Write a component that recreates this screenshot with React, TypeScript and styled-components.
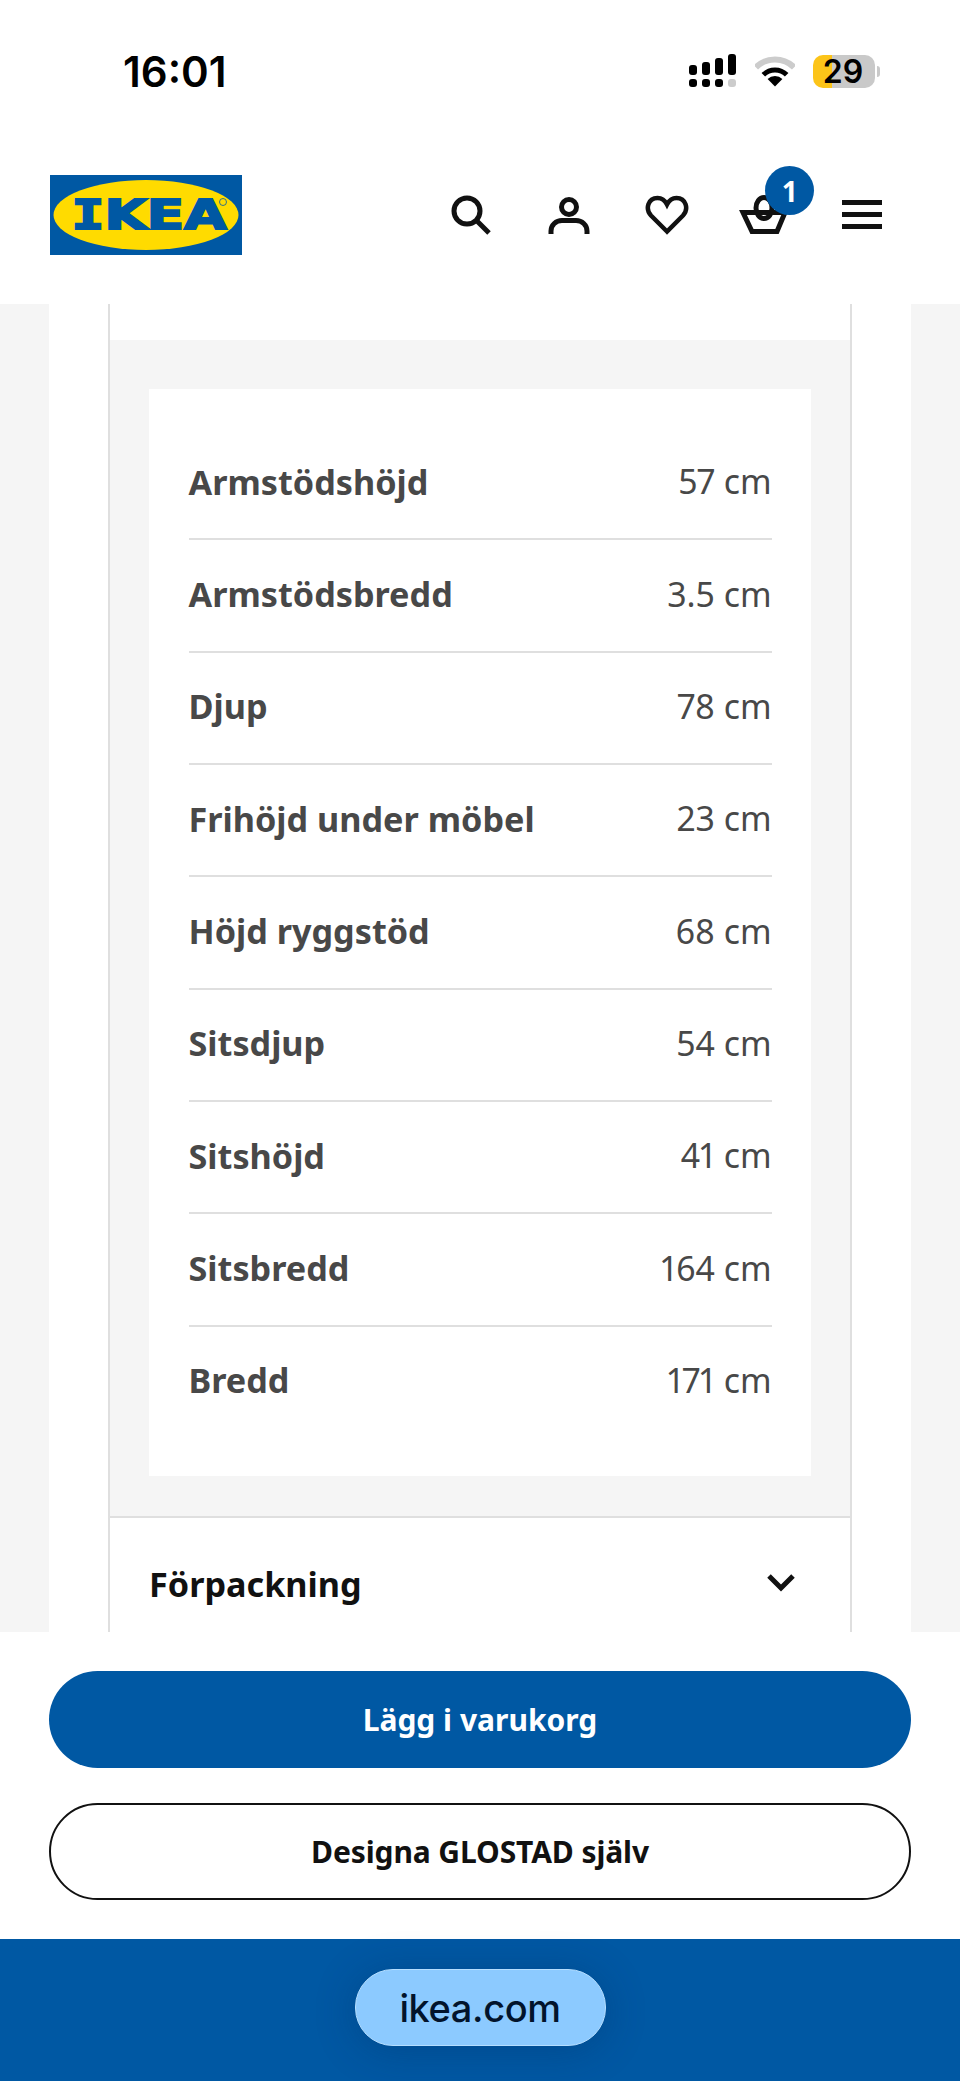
import styled, { createGlobalStyle } from 'styled-components';

const specs = [
	['Armstödshöjd', '57 cm'],
	['Armstödsbredd', '3.5 cm'],
	['Djup', '78 cm'],
	['Frihöjd under möbel', '23 cm'],
	['Höjd ryggstöd', '68 cm'],
	['Sitsdjup', '54 cm'],
	['Sitshöjd', '41 cm'],
	['Sitsbredd', '164 cm'],
	['Bredd', '171 cm'],
];

const GlobalStyle = createGlobalStyle`
	html, body {
		margin: 0;
		padding: 0;
		background: #fff;
	}
	* {
		box-sizing: border-box;
	}
`;

const Page = styled.div`
	width: 960px;
	height: 2081px;
	display: flex;
	flex-direction: column;
	overflow: hidden;
	font-family: "Noto Sans", sans-serif;
	background: #fff;
`;

const StatusBar = styled.div`
	height: 142px;
	flex: none;
	display: flex;
	align-items: center;
	justify-content: space-between;
	padding: 0 85px 0 123px;
`;

const Time = styled.span`
	font-family: Inter, sans-serif;
	font-size: 42px;
	font-weight: 600;
	color: #000;
`;

const StatusIcons = styled.div`
	display: flex;
	align-items: center;
	gap: 18px;
`;

const Battery = styled.div`
	position: relative;
	width: 62px;
	height: 33px;
	padding-right: 2px;
	border-radius: 10px;
	background: linear-gradient(90deg, #fcc419 0, #fcc419 31%, #c9c9c9 31%);
	display: flex;
	align-items: center;
	justify-content: center;
	font-family: Inter, sans-serif;
	font-size: 32px;
	font-weight: 600;
	color: #000;

	&::after {
		content: '';
		position: absolute;
		right: -5px;
		top: 11px;
		width: 3px;
		height: 11px;
		border-radius: 0 3px 3px 0;
		background: #c9c9c9;
	}
`;

const Nav = styled.header`
	height: 162px;
	flex: none;
	display: flex;
	align-items: flex-start;
	justify-content: space-between;
	padding: 33px 73px 0 50px;
`;

const NavIcons = styled.div`
	height: 80px;
	display: flex;
	align-items: center;
	gap: 47.7px;
`;

const IconButton = styled.div`
	position: relative;
	width: 50px;
	height: 50px;
	display: flex;
	align-items: center;
	justify-content: center;
`;

const Badge = styled.span`
	position: absolute;
	left: 26px;
	top: -24px;
	width: 49px;
	height: 49px;
	border-radius: 50%;
	background: #0058a3;
	color: #fff;
	font-size: 28px;
	font-weight: 700;
	display: flex;
	align-items: center;
	justify-content: center;
`;

const Content = styled.main`
	flex: 1;
	min-height: 0;
	overflow: hidden;
	background: #f5f5f5;
	padding: 0 49px;
`;

const Sheet = styled.div`
	height: 100%;
	background: #fff;
	padding: 0 59px;
`;

const Accordion = styled.section`
	padding-top: 36px;
	border-left: 2px solid #dfdfdf;
	border-right: 2px solid #dfdfdf;
`;

const Panel = styled.div`
	background: #f5f5f5;
	padding: 49px 39px 40px;
	border-bottom: 2px solid #dfdfdf;
`;

const Card = styled.dl`
	margin: 0;
	background: #fff;
	padding: 39px 39.5px 36.85px;
`;

const Row = styled.div<{ $last?: boolean }>`
	height: 112.35px;
	padding-bottom: 4px;
	display: flex;
	align-items: center;
	justify-content: space-between;
	border-bottom: 2px solid ${p => (p.$last ? 'transparent' : '#dfdfdf')};
`;

const Label = styled.dt`
	font-size: 34.2px;
	font-weight: 700;
	color: #484848;
`;

const Value = styled.dd`
	margin: 0;
	font-size: 33.8px;
	font-weight: 400;
	font-variant-numeric: proportional-nums;
	color: #484848;
`;

const AccordionHead = styled.div`
	height: 131px;
	display: flex;
	align-items: center;
	justify-content: space-between;
	padding: 0 54px 0 39px;
	font-size: 34.2px;
	font-weight: 700;
	color: #111;
`;

const Actions = styled.div`
	height: 307px;
	flex: none;
	background: #fff;
	padding: 39px 49px 0;
	display: flex;
	flex-direction: column;
	gap: 35px;
`;

const ActionButton = styled.div<{ $primary?: boolean }>`
	height: 97px;
	border-radius: 49px;
	display: flex;
	align-items: center;
	justify-content: center;
	font-size: 30px;
	font-weight: 700;
	letter-spacing: ${p => (p.$primary ? '0' : '-0.1px')};
	background: ${p => (p.$primary ? '#0058a3' : '#fff')};
	color: ${p => (p.$primary ? '#fff' : '#111')};
	border: ${p => (p.$primary ? 'none' : '2px solid #111')};
`;

const UrlBar = styled.div`
	height: 142px;
	flex: none;
	background: #0058a3;
	display: flex;
	justify-content: center;
	padding-top: 30px;
`;

const UrlPill = styled.div`
	width: 251px;
	height: 77px;
	border-radius: 38px;
	background: #8ccaff;
	border: 1px solid #b5deff;
	box-shadow: 0 4px 40px rgba(0, 40, 90, 0.3);
	display: flex;
	align-items: center;
	justify-content: center;
	font-family: Inter, sans-serif;
	font-size: 38px;
	font-weight: 500;
	letter-spacing: -0.4px;
	color: #02142c;
`;

const Logo = () => (
	<svg width="192" height="80" viewBox="0 0 192 80">
		<rect width="192" height="80" fill="#0058a3" />
		<ellipse cx="96" cy="40" rx="92.5" ry="35" fill="#ffdb00" />
		<text x="21.5" y="53.5" fontFamily="'DejaVu Sans', sans-serif" fontWeight="700" fontSize="40" textLength="155" lengthAdjust="spacingAndGlyphs" fill="#0058a3" stroke="#0058a3" strokeWidth="2">
			<tspan fontFamily="'DejaVu Sans Mono', monospace">I</tspan>KEA
		</text>
		<circle cx="173" cy="27" r="3.5" fill="none" stroke="#0058a3" strokeWidth="0.8" />
	</svg>
);

const Signal = () => (
	<svg width="48" height="34" viewBox="0 0 48 34">
		<rect x="0" y="11" width="8" height="10" rx="3" />
		<rect x="13" y="8" width="8" height="13" rx="3" />
		<rect x="26" y="4" width="8" height="17" rx="3" />
		<rect x="39" y="0" width="8" height="21" rx="3" />
		<rect x="0" y="25" width="8" height="8" rx="3" />
		<rect x="13" y="25" width="8" height="8" rx="3" />
		<rect x="26" y="25" width="8" height="8" rx="3" />
		<rect x="39" y="25" width="8" height="8" rx="3" fill="#ccc" />
	</svg>
);

const Wifi = () => (
	<svg width="40" height="31" viewBox="0 0 40 31" fill="none">
		<path d="M0.9 11.4 A27 27 0 0 1 39.1 11.4" stroke="#ccc" strokeWidth="6" />
		<path d="M8.33 18.83 A16.5 16.5 0 0 1 31.67 18.83" stroke="#000" strokeWidth="5" />
		<path d="M20 30.5 L12.6 23.1 A10.5 10.5 0 0 1 27.4 23.1 Z" fill="#000" />
	</svg>
);

const SearchIcon = () => (
	<svg width="42" height="42" viewBox="0 0 42 42" fill="none" stroke="#111" strokeWidth="5">
		<circle cx="17" cy="17" r="13" />
		<path d="M26 26 L39 39" />
	</svg>
);

const PersonIcon = () => (
	<svg width="42" height="42" viewBox="0 0 42 42" fill="none" stroke="#111" strokeWidth="5">
		<circle cx="21" cy="13" r="7.5" />
		<path d="M3 40 V37 C3 31 8 26.5 14 26.5 H28 C34 26.5 39 31 39 37 V40" />
	</svg>
);

const HeartIcon = () => (
	<svg width="44" height="40" viewBox="0 0 44 40" fill="none" stroke="#111" strokeWidth="4.5">
		<path d="M22 36.5 L6 20.5 C0 14 3 3 12.5 3 C16.5 3 20 5.5 22 9.5 C24 5.5 27.5 3 31.5 3 C41 3 44 14 38 20.5 Z" />
	</svg>
);

const BasketIcon = () => (
	<svg width="50" height="42" viewBox="0 0 50 42" fill="none" stroke="#111" strokeWidth="5">
		<ellipse cx="25" cy="14" rx="8" ry="10.5" />
		<path d="M4 18.5 H46 L38 37.5 H13 Z" />
	</svg>
);

const MenuIcon = () => (
	<svg width="40" height="30" viewBox="0 0 40 30" fill="#111">
		<rect y="0" width="40" height="5" />
		<rect y="12" width="40" height="5" />
		<rect y="24" width="40" height="5" />
	</svg>
);

const Chevron = () => (
	<svg width="30" height="20" viewBox="0 0 30 20" fill="none" stroke="#111" strokeWidth="5">
		<path d="M3 3 L15 15 L27 3" />
	</svg>
);

export default function App() {
	return (
		<Page>
			<GlobalStyle />
			<StatusBar>
				<Time>16:01</Time>
				<StatusIcons>
					<Signal />
					<Wifi />
					<Battery>29</Battery>
				</StatusIcons>
			</StatusBar>
			<Nav>
				<Logo />
				<NavIcons>
					<IconButton><SearchIcon /></IconButton>
					<IconButton><PersonIcon /></IconButton>
					<IconButton><HeartIcon /></IconButton>
					<IconButton><BasketIcon /><Badge>1</Badge></IconButton>
					<IconButton><MenuIcon /></IconButton>
				</NavIcons>
			</Nav>
			<Content>
				<Sheet>
					<Accordion>
						<Panel>
							<Card>
								{specs.map(([label, value], i) => (
									<Row key={label} $last={i === specs.length - 1}>
										<Label>{label}</Label>
										<Value>{value}</Value>
									</Row>
								))}
							</Card>
						</Panel>
						<AccordionHead>
							Förpackning
							<Chevron />
						</AccordionHead>
					</Accordion>
				</Sheet>
			</Content>
			<Actions>
				<ActionButton $primary>Lägg i varukorg</ActionButton>
				<ActionButton>Designa GLOSTAD själv</ActionButton>
			</Actions>
			<UrlBar>
				<UrlPill>ikea.com</UrlPill>
			</UrlBar>
		</Page>
	);
}
